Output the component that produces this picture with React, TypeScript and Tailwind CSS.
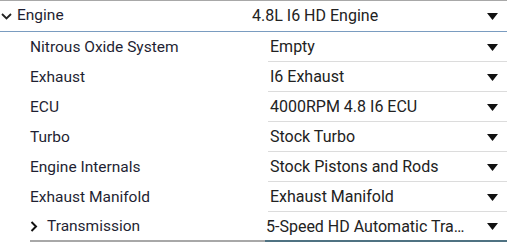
const PARTS = [
  { label: 'Nitrous Oxide System', value: 'Empty' },
  { label: 'Exhaust', value: 'I6 Exhaust' },
  { label: 'ECU', value: '4000RPM 4.8 I6 ECU' },
  { label: 'Turbo', value: 'Stock Turbo' },
  { label: 'Engine Internals', value: 'Stock Pistons and Rods' },
  { label: 'Exhaust Manifold', value: 'Exhaust Manifold' },
]

function Caret() {
  return (
    <svg width="11" height="7" viewBox="0 0 11 7" className="shrink-0">
      <path d="M0 0 L11 0 L5.5 7 Z" fill="#111" />
    </svg>
  )
}

export default function App() {
  return (
    <div
      className="w-[507px] h-[243px] bg-white text-[16px] text-[#222] overflow-hidden"
      style={{ fontFamily: 'Roboto, "Liberation Sans", sans-serif' }}
    >
      <div className="border-t border-[#a8a8a8]" />

      {/* Engine header row */}
      <div className="flex h-[31px] items-center border-b border-[#7a9cc0]">
        <div className="w-[250px] flex items-center text-[15.5px] text-[#1f1f33]">
          <svg width="11" height="7" viewBox="0 0 11 7" className="ml-[1px] shrink-0">
            <path d="M1 1 L5.5 5.5 L10 1" fill="none" stroke="#222" strokeWidth="1.8" />
          </svg>
          <span className="ml-[5px]">Engine</span>
        </div>
        <div className="flex-1 flex items-center pl-[2px] pr-[9px]">
          <span className="flex-1">4.8L I6 HD Engine</span>
          <Caret />
        </div>
      </div>

      {PARTS.map((p) => (
        <div key={p.label} className="flex h-[30px]">
          <div className="w-[268px] pl-[30px] pt-[1px] flex items-center text-[15.5px] text-[#1f1f33]">
            {p.label}
          </div>
          <div className="flex-1 flex items-center pl-[2px] pt-[1px] pr-[9px] border-b border-[#dcdcdc]">
            <span className="flex-1">{p.value}</span>
            <Caret />
          </div>
        </div>
      ))}

      {/* Transmission row */}
      <div className="flex h-[30px] ml-[30px]">
        <div className="w-[235px] flex items-center pt-[1px] border-b-2 border-[#a8a8a8] text-[15.5px] text-[#1f1f33]">
          <svg width="8" height="11" viewBox="0 0 8 11" className="ml-[0px] shrink-0">
            <path d="M1.5 1 L6 5.5 L1.5 10" fill="none" stroke="#111" strokeWidth="2" />
          </svg>
          <span className="ml-[9px]">Transmission</span>
        </div>
        <div className="flex-1 min-w-0 flex items-center pl-[1px] pt-[1px] pr-[9px] border-b-2 border-[#4f7282]">
          <span className="flex-1 min-w-0 truncate pr-[18px]">5-Speed HD Automatic Transmission</span>
          <Caret />
        </div>
      </div>
    </div>
  )
}
